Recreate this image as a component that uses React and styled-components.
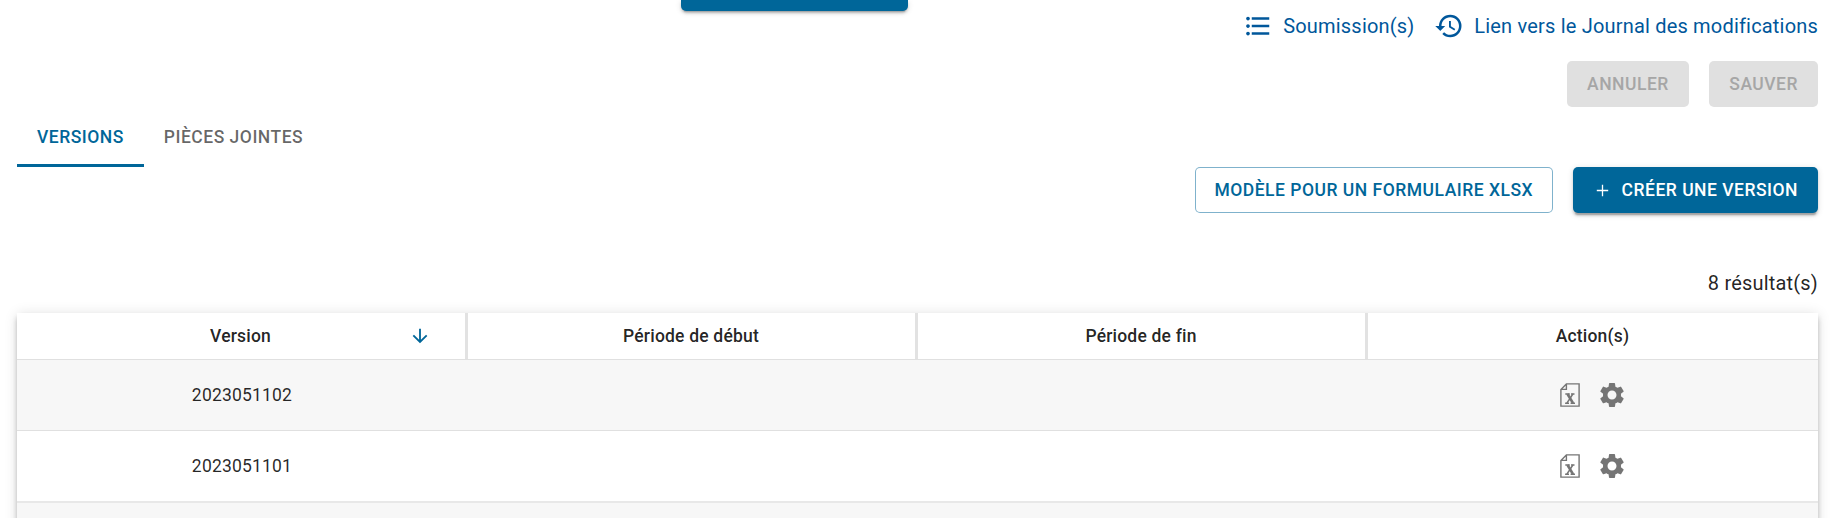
import React from 'react';
import styled, { createGlobalStyle, css } from 'styled-components';
import { MdFormatListBulleted, MdHistory, MdArrowDownward, MdSettings } from 'react-icons/md';

const GlobalStyle = createGlobalStyle`
  *, *::before, *::after { box-sizing: border-box; }
  body {
    margin: 0;
    background: #fff;
    color: rgba(0, 0, 0, 0.87);
    font-family: Roboto, sans-serif;
    overflow: hidden;
  }
`;

const primary = '#006699';

const Page = styled.main`
  height: 518px;
  padding: 0 24px 0 17px;
  overflow: hidden;
`;

const TopArea = styled.div`
  display: grid;
  grid-template-columns: 664px 226.5px 1fr;
  height: 61px;
`;

const Button = styled.button`
  display: inline-flex;
  align-items: center;
  justify-content: center;
  height: 46px;
  padding: 0 20px;
  border: 0;
  border-radius: 5px;
  font: 500 17.5px/30px Roboto, sans-serif;
  letter-spacing: 0.5px;
  text-transform: uppercase;
  white-space: nowrap;
  ${({ $kind }) =>
    $kind === 'disabled' &&
    css`
      padding-left: 20.5px;
      background: #e0e0e0;
      color: #a6a6a6;
    `}
  ${({ $kind }) =>
    $kind === 'outlined' &&
    css`
      padding: 0 18.5px 0 18.7px;
      background: #fff;
      color: ${primary};
      border: 1.25px solid rgba(0, 102, 153, 0.5);
    `}
  ${({ $kind }) =>
    $kind === 'contained' &&
    css`
      background: ${primary};
      color: #fff;
      box-shadow: 0 3.75px 1.25px -2.5px rgba(0, 0, 0, 0.2), 0 2.5px 2.5px rgba(0, 0, 0, 0.14),
        0 1.25px 6.25px rgba(0, 0, 0, 0.12);
    `}
`;

const CutButton = styled(Button)`
  height: 11.3px;
  border-radius: 0 0 5px 5px;
`;

const Links = styled.nav`
  display: flex;
  justify-content: flex-end;
  align-items: flex-start;
  gap: 20px;
  padding-top: 10.5px;
`;

const Link = styled.a`
  display: flex;
  align-items: center;
  gap: 9.8px;
  height: 31px;
  color: #00579b;
  font-size: 20px;
  letter-spacing: 0.19px;
  white-space: nowrap;
`;

const ButtonRow = styled.div`
  display: flex;
  justify-content: flex-end;
  gap: 20px;
`;

const Tabs = styled.div`
  display: flex;
  height: 60px;
`;

const Tab = styled.div`
  display: flex;
  align-items: center;
  height: 60px;
  padding: 2px 20px 0;
  color: ${({ $active }) => ($active ? primary : 'rgba(0, 0, 0, 0.6)')};
  border-bottom: 3px solid ${({ $active }) => ($active ? primary : 'transparent')};
  font-size: 17.5px;
  font-weight: 500;
  letter-spacing: 0.5px;
  text-transform: uppercase;
`;

const PlusSvg = styled.svg`
  width: 19px;
  height: 19px;
  margin-right: 10px;
`;

const ResultCount = styled.p`
  margin: 55px 0 15px;
  font-size: 20px;
  line-height: 30px;
  letter-spacing: 0.19px;
  text-align: right;
`;

const Table = styled.section`
  height: 400px;
  background: #fff;
  box-shadow: 0 2.5px 5px -1px rgba(0, 0, 0, 0.2), 0 5px 6px rgba(0, 0, 0, 0.1),
    0 1.25px 12.5px rgba(0, 0, 0, 0.12);
`;

const rowHeights = { header: '47px', regular: '71px', thick: '72px' };

const Row = styled.div`
  display: grid;
  grid-template-columns: 451px 450px 450px 1fr;
  height: ${({ $size = 'regular' }) => rowHeights[$size]};
  background: ${({ $shaded }) => ($shaded ? '#f7f7f7' : '#fff')};
  border-bottom: ${({ $size }) => ($size === 'thick' ? '2px solid #e8e8e8' : '1px solid #e0e0e0')};
`;

const HeaderCell = styled.div`
  display: flex;
  align-items: center;
  justify-content: center;
  padding-right: 1px;
  font-size: 17.5px;
  font-weight: 500;
  letter-spacing: 0.19px;
  border-right: 3px solid #e2e2e2;
  &:last-child { border-right: 0; }
`;

const SortableLabel = styled.span`
  margin: 0 138px 0 160px;
`;

const Cell = styled.div`
  display: flex;
  align-items: center;
  justify-content: center;
  gap: 17px;
  padding-right: 1px;
  font-size: 17.5px;
  letter-spacing: 0.19px;
  color: rgba(0, 0, 0, 0.85);
`;

const ActionCell = styled(Cell)`
  padding: 0 0 0 1px;
`;

const ExcelSvg = styled.svg`
  width: 20px;
  height: 24px;
  margin-top: -1px;
  color: #757575;
`;

const GearIcon = styled(MdSettings)`
  width: 30px;
  height: 30px;
  color: #757575;
`;

function PlusIcon() {
  return (
    <PlusSvg viewBox="0 0 19 19" fill="none" stroke="currentColor" strokeWidth="1.3">
      <path d="M9.5 3.8V15.2M3.8 9.5H15.2" />
    </PlusSvg>
  );
}

function ExcelIcon() {
  return (
    <ExcelSvg viewBox="0 0 20 24" fill="none" stroke="currentColor" strokeWidth="1.4">
      <path d="M6.4 .9H19.1V23.1H.9V6.6ZM6.4 1.2V6.4H1.2" />
      <path d="M7.5 11 13 20.2" strokeWidth="2.6" />
      <path d="M12.9 11 6.9 20.2" strokeWidth="1.5" />
      <path d="M5.3 10.9h4.5M11 10.9h3.5M5.1 20.2h3.9M10.6 20.2h4.4" strokeWidth="1.5" />
    </ExcelSvg>
  );
}

const versions = [
  { id: '2023051102', shaded: true },
  { id: '2023051101', shaded: false },
];

export default function App() {
  return (
    <>
      <GlobalStyle />
      <Page>
        <TopArea>
          <span />
          <CutButton $kind="contained" aria-label="Action" />
          <Links>
            <Link>
              <MdFormatListBulleted size={30} />
              Soumission(s)
            </Link>
            <Link>
              <MdHistory size={30} />
              Lien vers le Journal des modifications
            </Link>
          </Links>
        </TopArea>
        <ButtonRow>
          <Button $kind="disabled">Annuler</Button>
          <Button $kind="disabled">Sauver</Button>
        </ButtonRow>
        <Tabs>
          <Tab $active>Versions</Tab>
          <Tab>Pièces jointes</Tab>
        </Tabs>
        <ButtonRow>
          <Button $kind="outlined">Modèle pour un formulaire XLSX</Button>
          <Button $kind="contained">
            <PlusIcon />
            Créer une version
          </Button>
        </ButtonRow>
        <ResultCount>8 résultat(s)</ResultCount>
        <Table>
          <Row $size="header">
            <HeaderCell>
              <SortableLabel>Version</SortableLabel>
              <MdArrowDownward size={22} color={primary} />
            </HeaderCell>
            <HeaderCell>Période de début</HeaderCell>
            <HeaderCell>Période de fin</HeaderCell>
            <HeaderCell>Action(s)</HeaderCell>
          </Row>
          {versions.map(({ id, shaded }) => (
            <Row key={id} $shaded={shaded} $size={shaded ? 'regular' : 'thick'}>
              <Cell>{id}</Cell>
              <Cell />
              <Cell />
              <ActionCell>
                <ExcelIcon />
                <GearIcon />
              </ActionCell>
            </Row>
          ))}
          <Row $shaded />
        </Table>
      </Page>
    </>
  );
}
